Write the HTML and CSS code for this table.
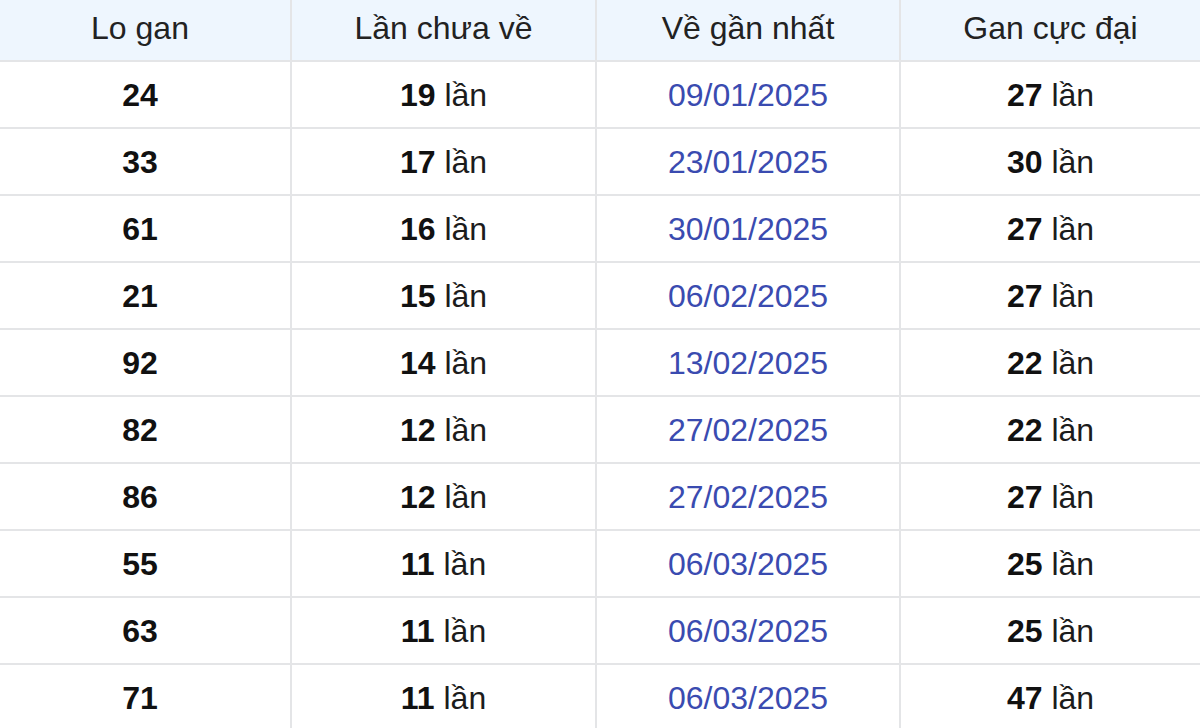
FILE: index.html
```html
<!DOCTYPE html>
<html lang="vi">
<head>
<meta charset="utf-8">
<title>Lo gan</title>
<link rel="stylesheet" href="styles.css">
</head>
<body>
<table class="gan-table">
  <colgroup>
    <col class="c1"><col class="c2"><col class="c3"><col class="c4">
  </colgroup>
  <thead>
    <tr><th>Lo gan</th><th>Lần chưa về</th><th>Về gần nhất</th><th>Gan cực đại</th></tr>
  </thead>
  <tbody>
    <tr><td><b>24</b></td><td><b>19</b> lần</td><td class="date">09/01/2025</td><td><b>27</b> lần</td></tr>
    <tr><td><b>33</b></td><td><b>17</b> lần</td><td class="date">23/01/2025</td><td><b>30</b> lần</td></tr>
    <tr><td><b>61</b></td><td><b>16</b> lần</td><td class="date">30/01/2025</td><td><b>27</b> lần</td></tr>
    <tr><td><b>21</b></td><td><b>15</b> lần</td><td class="date">06/02/2025</td><td><b>27</b> lần</td></tr>
    <tr><td><b>92</b></td><td><b>14</b> lần</td><td class="date">13/02/2025</td><td><b>22</b> lần</td></tr>
    <tr><td><b>82</b></td><td><b>12</b> lần</td><td class="date">27/02/2025</td><td><b>22</b> lần</td></tr>
    <tr><td><b>86</b></td><td><b>12</b> lần</td><td class="date">27/02/2025</td><td><b>27</b> lần</td></tr>
    <tr><td><b>55</b></td><td><b>11</b> lần</td><td class="date">06/03/2025</td><td><b>25</b> lần</td></tr>
    <tr><td><b>63</b></td><td><b>11</b> lần</td><td class="date">06/03/2025</td><td><b>25</b> lần</td></tr>
    <tr><td><b>71</b></td><td><b>11</b> lần</td><td class="date">06/03/2025</td><td><b>47</b> lần</td></tr>
  </tbody>
</table>
</body>
</html>
```
FILE: styles.css
```css
html, body {
  margin: 0;
  padding: 0;
  background: #ffffff;
}
body {
  font-family: "Liberation Sans", Arial, sans-serif;
  color: #1a1a1a;
  overflow: hidden;
}
.gan-table {
  width: 1210px;
  margin-left: -10px;
  border-collapse: collapse;
  table-layout: fixed;
  font-size: 32px;
}
.c1 { width: 301px; }
.c2 { width: 305px; }
.c3 { width: 304px; }
.c4 { width: 300px; }
.gan-table th,
.gan-table td {
  text-align: center;
  vertical-align: middle;
  padding: 0;
  border: 2px solid #e4e5e7;
}
.gan-table tr > :first-child { border-left: none; }
.gan-table tr > :last-child { border-right: none; }
.gan-table thead th {
  border-top: none;
  height: 57px;
  padding-bottom: 3px;
  background: #eef6fe;
  font-weight: normal;
  color: #222222;
}
.gan-table tbody td {
  height: 64px;
  padding-top: 1px;
  color: #1c1c1c;
}
.gan-table b {
  font-weight: bold;
  color: #111111;
}
.gan-table td.date {
  color: #3a4bb0;
}
```
